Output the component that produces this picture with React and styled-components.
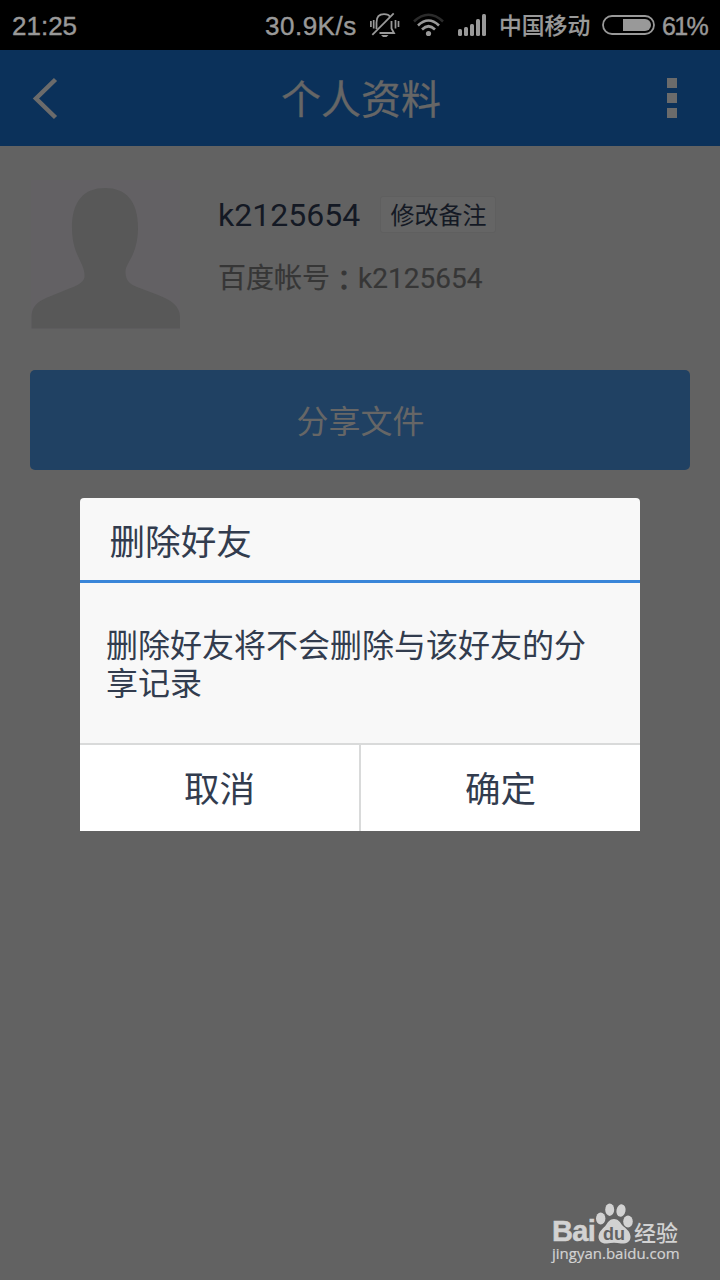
import React from "react";
import styled, { createGlobalStyle } from "styled-components";

const GlobalStyle = createGlobalStyle`
  * { box-sizing: border-box; }
  body { margin: 0; background: #626262; }
  button { border: 0; padding: 0; margin: 0; background: none; font: inherit; color: inherit; }
  h1, h2, p { margin: 0; font-weight: 400; }
`;

const Screen = styled.div`
  position: relative;
  width: 720px;
  height: 1280px;
  overflow: hidden;
  display: flex;
  flex-direction: column;
  background: #626262;
  font-family: Roboto, "Noto Sans CJK SC", sans-serif;
`;

const StatusBar = styled.header`
  height: 50px;
  flex: none;
  display: flex;
  align-items: center;
  padding: 0 12px;
  background: #000;
  color: #999;
  font-family: "Liberation Sans", "Noto Sans CJK SC", sans-serif;
  font-size: 26px;
  line-height: 50px;
  white-space: nowrap;
`;

const StatusText = styled.span`
  flex: none;
  width: ${(p) => p.$width}px;
  margin-left: ${(p) => p.$gap || 0}px;
  font-size: ${(p) => p.$size || 26}px;
  font-weight: ${(p) => p.$weight || 400};
  letter-spacing: ${(p) => p.$spacing || 0}px;
  padding-top: 2px;
  -webkit-text-stroke: ${(p) => p.$stroke || 0}px currentColor;
`;

const StatusIcon = styled.svg`
  display: block;
  flex: none;
  margin-left: ${(p) => p.$gap || 0}px;
`;

const TitleBar = styled.nav`
  height: 96px;
  flex: none;
  display: grid;
  grid-template-columns: 96px 1fr 96px;
  align-items: center;
  background: #0b315a;
  color: #666;
`;

const Title = styled.h1`
  font-size: 40px;
  line-height: 60px;
  text-align: center;
  padding: 6px 0 0 2px;
  -webkit-text-stroke: 0.3px currentColor;
`;

const IconButton = styled.button`
  display: flex;
  align-items: center;
  justify-content: center;
  height: 96px;
`;

const BackButton = styled(IconButton)`
  justify-content: flex-start;
  padding-left: 30px;
`;

const Content = styled.main`
  flex: 1;
  display: flex;
  flex-direction: column;
  padding: 34px 30px 0;
`;

const Profile = styled.section`
  display: flex;
  height: 150px;
`;

const Info = styled.div`
  display: flex;
  flex-direction: column;
  padding: 15px 0 0 38px;
`;

const NameRow = styled.div`
  display: flex;
  align-items: center;
  gap: 20px;
  height: 38px;
`;

const Name = styled.span`
  font-size: 32px;
  line-height: 38px;
  padding-top: 1px;
  color: #141924;
`;

const RemarkButton = styled.button`
  width: 116px;
  height: 37px;
  border: 1px solid #5f5f5f;
  border-radius: 3px;
  background: #656565;
  color: #141924;
  font-size: 24px;
  line-height: 32px;
  padding: 3px 0 0 1px;
`;

const Account = styled.p`
  margin-top: 25px;
  height: 42px;
  display: flex;
  color: #363636;
  font-size: 28px;
  line-height: 42px;
  -webkit-text-stroke: 0.2px currentColor;
`;

const Colon = styled.span`
  width: 28px;
  text-align: center;
  font-family: "Noto Sans CJK TC", sans-serif;
  -webkit-text-stroke: 0.8px currentColor;
`;

const ShareButton = styled.button`
  height: 100px;
  margin-top: 40px;
  border-radius: 5px;
  background: #204163;
  color: #666;
  font-size: 32px;
  line-height: 96px;
  padding: 4px 0 0 1px;
`;

const Dialog = styled.section`
  position: absolute;
  left: 80px;
  top: 498px;
  width: 560px;
  height: 333px;
  display: flex;
  flex-direction: column;
  border-radius: 4px 4px 0 0;
  overflow: hidden;
  background: #f8f8f8;
  color: #323c4e;
`;

const DialogTitle = styled.h2`
  height: 85px;
  padding: 5px 30px 0 29.5px;
  border-bottom: 3px solid #3a86d9;
  font-size: 35.6px;
  line-height: 80px;
`;

const DialogMessage = styled.p`
  flex: 1;
  padding: 44px 26px 0;
  font-size: 32px;
  line-height: 38px;
`;

const DialogActions = styled.div`
  display: grid;
  grid-template-columns: 281px 279px;
  height: 88px;
  border-top: 2px solid #d9dada;
  background: #fff;
`;

const ActionButton = styled.button`
  font-size: 35.6px;
  line-height: 82px;
  padding-top: 4px;
  &:first-child { border-right: 2px solid #d9dada; }
`;

const Watermark = styled.footer`
  position: absolute;
  left: 552px;
  top: 1202px;
  width: 132px;
  display: flex;
  flex-direction: column;
  color: #d2d2d2;
`;

const Brand = styled.div`
  display: flex;
  align-items: flex-end;
  height: 42px;
  font-family: "Liberation Sans", sans-serif;
  font-weight: 700;
`;

const BrandLatin = styled.span`
  width: 43px;
  height: 25px;
  line-height: 25px;
  font-size: 29px;
  letter-spacing: -0.7px;
  -webkit-text-stroke: 0.5px currentColor;
`;

const Paw = styled.svg`
  display: block;
  flex: none;
`;

const BrandChinese = styled.span`
  margin-left: 1px;
  height: 24px;
  font-family: "Noto Sans CJK SC", sans-serif;
  font-size: 22px;
  line-height: 22px;
  font-weight: 500;
`;

const Site = styled.span`
  font-family: "Open Sans", sans-serif;
  font-size: 15px;
  line-height: 19px;
  white-space: nowrap;
  -webkit-text-stroke: 0.2px currentColor;
`;

function MuteIcon() {
  return (
    <StatusIcon $gap={13} width="30" height="26" viewBox="0 0 30 26" fill="none" stroke="#999" strokeWidth="1.800">
      <path d="M6.500 17V10.500C6.500 5 9.500 2.200 14 2.200C17 2.200 19 3 20 5M21.500 9V16.500L24 21H9.500" />
      <path d="M2.300 22.800L23.700 1.300" />
      <path d="M0.900 9V15M3.700 8V16.500M25.500 8V16.500M28.500 9V15" strokeWidth="1.700" />
      <path d="M11 23H18.500L16.500 25H13Z" fill="#999" stroke="none" />
    </StatusIcon>
  );
}

function WifiIcon() {
  return (
    <StatusIcon $gap={13} width="32" height="26" viewBox="0 0 32 26" fill="none" stroke="#999" strokeWidth="2.600">
      <path d="M1 9.500Q15.500 -4 30 9.500" stroke="#2b2b2b" />
      <path d="M5 13.500Q15.500 3.500 26 13.500" />
      <path d="M9 17.500Q15.500 11 22 17.500" />
      <circle cx="15.500" cy="21.500" r="2.600" fill="#999" stroke="none" />
    </StatusIcon>
  );
}

function SignalIcon() {
  return (
    <StatusIcon $gap={12} width="30" height="24" viewBox="0 0 30 24" fill="#999">
      <rect x="1" y="16" width="4" height="7" rx="1.500" />
      <rect x="7" y="14" width="4" height="9" rx="1.500" />
      <rect x="13" y="11" width="4" height="12" rx="1.500" />
      <rect x="19" y="6" width="4" height="17" rx="1.500" />
      <rect x="25" y="1" width="4" height="22" rx="1.500" />
    </StatusIcon>
  );
}

function BatteryIcon() {
  return (
    <StatusIcon $gap={12} width="53" height="20" viewBox="0 0 53 20">
      <rect x="1" y="1" width="51" height="18" rx="9" fill="none" stroke="#999" strokeWidth="1.800" />
      <path d="M21 4H43A6 6 0 0 1 43 16H21Z" fill="#999" />
    </StatusIcon>
  );
}

function Avatar() {
  return (
    <svg width="150" height="150" viewBox="0 0 150 150">
      <rect x="1" y="0" width="149" height="149" fill="#636164" />
      <path
        d="M1.500 148.500V137C1.500 126 8 122 16 118L38 109C50 105 54 101 54.500 97C55 89 51 83 47 74C44 67 42 58 42 48C42 21 54 8 75 8C96 8 108 21 108 48C108 58 106 67 103 74C99 83 95 87 95.500 93C96 100 99 104 107 107L128 115C141 120 150 126 150 137V148.500Z"
        fill="#585858"
      />
    </svg>
  );
}

function PawLogo() {
  return (
    <Paw width="38" height="41" viewBox="0 0 38 41" fill="#d2d2d2">
      <ellipse cx="5.700" cy="15.500" rx="4.700" ry="6" />
      <ellipse cx="14.700" cy="6.700" rx="4.500" ry="6.200" />
      <ellipse cx="26" cy="7.500" rx="4.500" ry="6.200" transform="rotate(12 26 7.500)" />
      <ellipse cx="33" cy="18.500" rx="4.800" ry="6" />
      <path d="M19 16C23 16 25 19 27 22C30 25 35.500 28 35.500 34C35.500 39 31 41 26 40.500C21 39.500 17 39.500 12 40.500C7 41 3.500 38 3.500 34C3.500 28 9 25 11 22C13 19 15 16 19 16Z" />
      <text x="19" y="36.500" textAnchor="middle" fontFamily="Liberation Sans, sans-serif" fontWeight="700" fontSize="18" fill="#626262">du</text>
    </Paw>
  );
}

export default function App() {
  return (
    <Screen>
      <GlobalStyle />
      <StatusBar>
        <StatusText $width={65} $stroke={0.4}>21:25</StatusText>
        <StatusText $width={92} $gap={188} $spacing={0.5} $stroke={0.4}>30.9K/s</StatusText>
        <MuteIcon />
        <WifiIcon />
        <SignalIcon />
        <StatusText $width={91} $gap={12} $size={22.8} $weight={500} $stroke={0.2}>中国移动</StatusText>
        <BatteryIcon />
        <StatusText $width={47} $gap={7} $size={25} $spacing={-1.6} $stroke={0.4}>61%</StatusText>
      </StatusBar>
      <TitleBar>
        <BackButton aria-label="返回">
          <svg width="30" height="44" viewBox="0 0 30 44" fill="none" stroke="#6b6b6b" strokeWidth="4.500">
            <path d="M25.500 3.500L6 22.500L25.500 41.500" />
          </svg>
        </BackButton>
        <Title>个人资料</Title>
        <IconButton aria-label="更多">
          <svg width="10" height="40" viewBox="0 0 10 40" fill="#6b6b6b">
            <path d="M0 0H10V10H0ZM0 15H10V25H0ZM0 30H10V40H0Z" />
          </svg>
        </IconButton>
      </TitleBar>
      <Content>
        <Profile>
          <Avatar />
          <Info>
            <NameRow>
              <Name>k2125654</Name>
              <RemarkButton>修改备注</RemarkButton>
            </NameRow>
            <Account>百度帐号<Colon>：</Colon>k2125654</Account>
          </Info>
        </Profile>
        <ShareButton>分享文件</ShareButton>
      </Content>
      <Dialog role="dialog">
        <DialogTitle>删除好友</DialogTitle>
        <DialogMessage>删除好友将不会删除与该好友的分享记录</DialogMessage>
        <DialogActions>
          <ActionButton>取消</ActionButton>
          <ActionButton>确定</ActionButton>
        </DialogActions>
      </Dialog>
      <Watermark>
        <Brand>
          <BrandLatin>Bai</BrandLatin>
          <PawLogo />
          <BrandChinese>经验</BrandChinese>
        </Brand>
        <Site>jingyan.baidu.com</Site>
      </Watermark>
    </Screen>
  );
}
